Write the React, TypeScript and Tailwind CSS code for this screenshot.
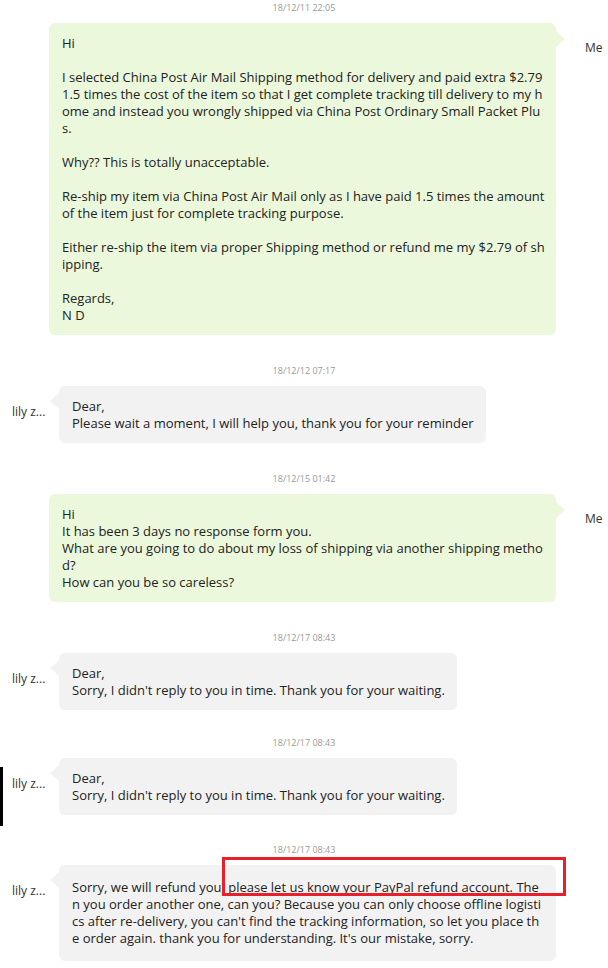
type Msg = {
  time: string;
  from: 'me' | 'lily';
  lines: string[];
  width?: string;
  gap: string;
  pad?: string;
};

const MESSAGES: Msg[] = [
  {
    time: '18/12/11 22:05',
    from: 'me',
    width: 'w-[507px]',
    gap: 'pt-[2px]',
    lines: [
      'Hi',
      '',
      'I selected China Post Air Mail Shipping method for delivery and paid extra $2.79',
      '1.5 times the cost of the item so that I get complete tracking till delivery to my h',
      'ome and instead you wrongly shipped via China Post Ordinary Small Packet Plu',
      's.',
      '',
      'Why?? This is totally unacceptable.',
      '',
      'Re-ship my item via China Post Air Mail only as I have paid 1.5 times the amount',
      'of the item just for complete tracking purpose.',
      '',
      'Either re-ship the item via proper Shipping method or refund me my $2.79 of sh',
      'ipping.',
      '',
      'Regards,',
      'N D',
    ],
  },
  {
    time: '18/12/12 07:17',
    from: 'lily',
    gap: 'pt-[30px]',
    lines: ['Dear,', 'Please wait a moment, I will help you, thank you for your reminder'],
  },
  {
    time: '18/12/15 01:42',
    from: 'me',
    width: 'w-[507px]',
    gap: 'pt-[30px]',
    lines: [
      'Hi',
      'It has been 3 days no response form you.',
      'What are you going to do about my loss of shipping via another shipping metho',
      'd?',
      'How can you be so careless?',
    ],
  },
  {
    time: '18/12/17 08:43',
    from: 'lily',
    gap: 'pt-[30px]',
    lines: ['Dear,', "Sorry, I didn't reply to you in time. Thank you for your waiting."],
  },
  {
    time: '18/12/17 08:43',
    from: 'lily',
    gap: 'pt-[27px]',
    lines: ['Dear,', "Sorry, I didn't reply to you in time. Thank you for your waiting."],
  },
  {
    time: '18/12/17 08:43',
    from: 'lily',
    width: 'w-[497px]',
    gap: 'pt-[29px]',
    pad: 'pt-[14px] pb-[14px]',
    lines: [
      'Sorry, we will refund you, please let us know your PayPal refund account. The',
      "n you order another one, can you? Because you can only choose offline logisti",
      "cs after re-delivery, you can't find the tracking information, so let you place th",
      "e order again. thank you for understanding. It's our mistake, sorry.",
    ],
  },
];

function Bubble({ msg }: { msg: Msg }) {
  const isMe = msg.from === 'me';
  const bg = isMe ? 'bg-[#ebf8dc]' : 'bg-[#f2f2f2]';
  return (
    <div
      className={`relative rounded-[6px] pl-[13px] pr-[12px] text-[13px] leading-[17px] text-[#222] ${bg} ${msg.width ?? 'w-fit'} ${msg.pad ?? 'pt-[12px] pb-[11px]'}`}
    >
      {msg.lines.map((line, i) => (
        <div key={i} className="h-[17px] whitespace-pre">
          {line}
        </div>
      ))}
      {isMe ? (
        <span className="absolute right-[-9px] top-[8px] h-0 w-0 border-y-[8px] border-l-[9px] border-y-transparent border-l-[#ebf8dc]" />
      ) : (
        <span className="absolute left-[-9px] top-[7px] h-0 w-0 border-y-[8px] border-r-[9px] border-y-transparent border-r-[#f2f2f2]" />
      )}
    </div>
  );
}

export default function App() {
  return (
    <div
      className="relative h-[968px] w-[608px] overflow-hidden bg-white"
      style={{ fontFamily: '"Open Sans", "Noto Sans", Arial, sans-serif' }}
    >
      {MESSAGES.map((msg, i) => (
        <div key={i} className={msg.gap}>
          <div className="mb-[9px] text-center text-[9px] leading-[12px] text-[#999]">{msg.time}</div>
          {msg.from === 'me' ? (
            <div className="flex items-start">
              <div className="w-[49px] shrink-0" />
              <Bubble msg={msg} />
              <div className="ml-[29px] pt-[16px] text-[12px] leading-[17px] text-[#333]">Me</div>
            </div>
          ) : (
            <div className="flex items-start">
              <div className="w-[59px] shrink-0 pl-[12px] pt-[17px] text-[12px] leading-[17px] text-[#333]">
                lily z...
              </div>
              <Bubble msg={msg} />
            </div>
          )}
        </div>
      ))}

      <div className="absolute left-0 top-[767px] h-[59px] w-[3px] bg-black" />
      <div className="absolute left-[222px] top-[857px] h-[39px] w-[344px] border-[3px] border-[#e8202a]" />
    </div>
  );
}
